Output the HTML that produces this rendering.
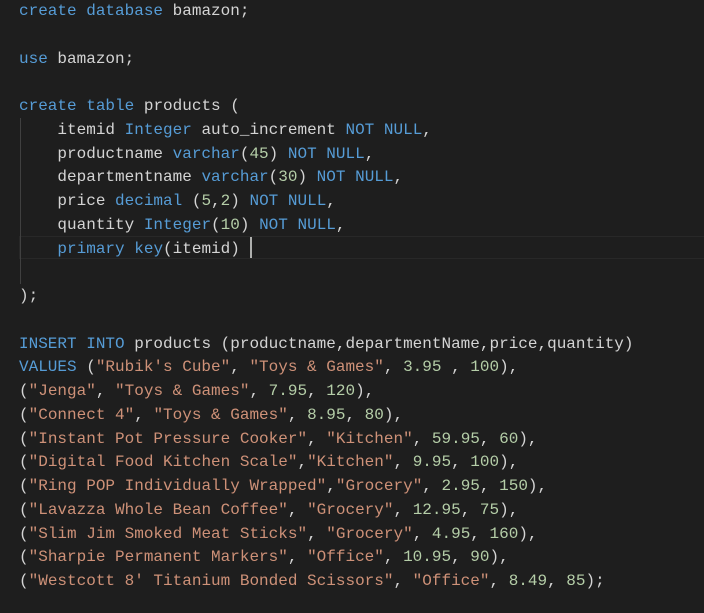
<!DOCTYPE html>
<html><head><style>
html,body{margin:0;padding:0;background:#1e1e1e;width:704px;height:613px;overflow:hidden}
pre{margin:0;position:absolute;left:19px;top:0px;font-family:"Liberation Mono",monospace;font-size:16px;line-height:23.75px;color:#d4d4d4;letter-spacing:0}
.k{color:#569cd6}.n{color:#b5cea8}.s{color:#ce9178}
.guide{position:absolute;left:20px;top:118px;width:1px;height:166px;background:#404040}
.cur{position:absolute;left:19px;top:236px;width:690px;height:23px;border:1px solid #282828;box-sizing:border-box}
.caret{position:absolute;left:250px;top:237px;width:2px;height:21px;background:#aeafad}
</style></head><body>
<div class="cur"></div><div class="guide"></div><div class="caret"></div>
<pre><span class="k">create</span> <span class="k">database</span> bamazon;

<span class="k">use</span> bamazon;

<span class="k">create</span> <span class="k">table</span> products (
    itemid <span class="k">Integer</span> auto_increment <span class="k">NOT</span> <span class="k">NULL</span>,
    productname <span class="k">varchar</span>(<span class="n">45</span>) <span class="k">NOT</span> <span class="k">NULL</span>,
    departmentname <span class="k">varchar</span>(<span class="n">30</span>) <span class="k">NOT</span> <span class="k">NULL</span>,
    price <span class="k">decimal</span> (<span class="n">5</span>,<span class="n">2</span>) <span class="k">NOT</span> <span class="k">NULL</span>,
    quantity <span class="k">Integer</span>(<span class="n">10</span>) <span class="k">NOT</span> <span class="k">NULL</span>,
    <span class="k">primary</span> <span class="k">key</span>(itemid) 

);

<span class="k">INSERT</span> <span class="k">INTO</span> products (productname,departmentName,price,quantity)
<span class="k">VALUES</span> (<span class="s">"Rubik's Cube"</span>, <span class="s">"Toys &amp; Games"</span>, <span class="n">3.95</span> , <span class="n">100</span>),
(<span class="s">"Jenga"</span>, <span class="s">"Toys &amp; Games"</span>, <span class="n">7.95</span>, <span class="n">120</span>),
(<span class="s">"Connect 4"</span>, <span class="s">"Toys &amp; Games"</span>, <span class="n">8.95</span>, <span class="n">80</span>),
(<span class="s">"Instant Pot Pressure Cooker"</span>, <span class="s">"Kitchen"</span>, <span class="n">59.95</span>, <span class="n">60</span>),
(<span class="s">"Digital Food Kitchen Scale"</span>,<span class="s">"Kitchen"</span>, <span class="n">9.95</span>, <span class="n">100</span>),
(<span class="s">"Ring POP Individually Wrapped"</span>,<span class="s">"Grocery"</span>, <span class="n">2.95</span>, <span class="n">150</span>),
(<span class="s">"Lavazza Whole Bean Coffee"</span>, <span class="s">"Grocery"</span>, <span class="n">12.95</span>, <span class="n">75</span>),
(<span class="s">"Slim Jim Smoked Meat Sticks"</span>, <span class="s">"Grocery"</span>, <span class="n">4.95</span>, <span class="n">160</span>),
(<span class="s">"Sharpie Permanent Markers"</span>, <span class="s">"Office"</span>, <span class="n">10.95</span>, <span class="n">90</span>),
(<span class="s">"Westcott 8' Titanium Bonded Scissors"</span>, <span class="s">"Office"</span>, <span class="n">8.49</span>, <span class="n">85</span>);</pre>
</body></html>
